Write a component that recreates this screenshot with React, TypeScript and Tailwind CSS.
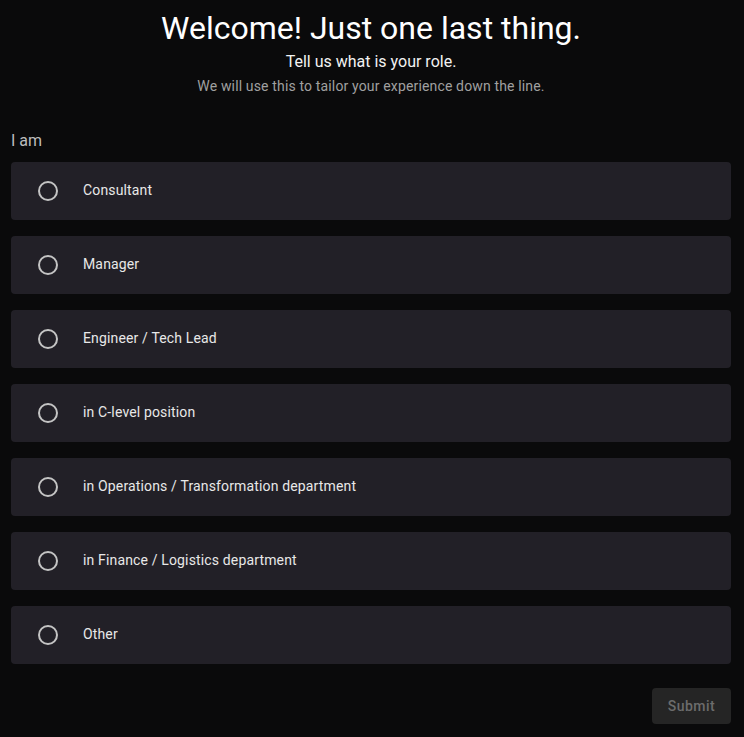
import React, { useState } from 'react';

const roles: string[] = [
    'Consultant',
    'Manager',
    'Engineer / Tech Lead',
    'in C-level position',
    'in Operations / Transformation department',
    'in Finance / Logistics department',
    'Other',
];

const RoleOption: React.FC<{ label: string; checked: boolean; onSelect: () => void }> = ({ label, checked, onSelect }) => {
    return (
        <button
            type="button"
            onClick={onSelect}
            className="flex h-[58px] w-full items-center rounded-[4px] bg-[#222027] text-left"
        >
            <span className="ml-[27px] flex h-5 w-5 items-center justify-center rounded-full border-2 border-[#c4c4c4]">
                {checked && <span className="h-2.5 w-2.5 rounded-full bg-[#c4c4c4]" />}
            </span>
            <span className="ml-[25px] mb-[2px] text-[14px] leading-5 tracking-[0.15px] text-[#e8e8e8]">{label}</span>
        </button>
    );
};

const App: React.FC = () => {
    const [selected, setSelected] = useState<string | null>(null);

    return (
        <div className="min-h-screen bg-[#0a0a0b] pl-[11px] pr-[13px] pt-2 pb-3 font-['Roboto','Liberation_Sans',sans-serif]">
            <div className="text-center">
                <h1 className="text-[32px] leading-10 font-normal text-white">Welcome! Just one last thing.</h1>
                <p className="mt-0.5 text-[16px] leading-6 text-[#f2f2f2]">Tell us what is your role.</p>
                <p className="mt-[2px] text-[14px] leading-5 tracking-[0.15px] text-[#a0a0a0]">
                    We will use this to tailor your experience down the line.
                </p>
            </div>

            <div className="mt-[33px] text-[16px] leading-6 text-[#bdbdbd]">I am</div>

            <div className="mt-[9px] flex flex-col gap-4">
                {roles.map((role) => (
                    <RoleOption key={role} label={role} checked={selected === role} onSelect={() => setSelected(role)} />
                ))}
            </div>

            <div className="mt-6 flex justify-end">
                <button
                    type="button"
                    disabled={!selected}
                    className="h-9 w-[79px] rounded-[4px] bg-[#252525] text-[14px] font-medium tracking-[0.5px] text-[#6c6c6c]"
                >
                    Submit
                </button>
            </div>
        </div>
    );
};

export default App;
